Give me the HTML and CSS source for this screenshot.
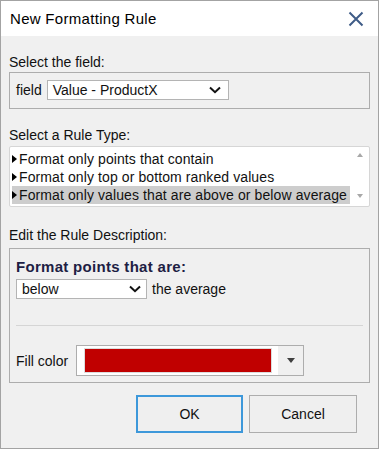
FILE: index.html
```html
<!DOCTYPE html>
<html>
<head>
<meta charset="utf-8">
<title>New Formatting Rule</title>
<link rel="stylesheet" href="styles.css">
</head>
<body>
<div class="window">
  <div class="titlebar">
    <span class="title">New Formatting Rule</span>
    <svg class="close" width="16" height="16" viewBox="0 0 16 16"><path d="M1.5 1.5L14.5 14.5M14.5 1.5L1.5 14.5" stroke="#3f5c87" stroke-width="2" fill="none"/></svg>
  </div>
  <div class="content">
    <div class="label">Select the field:</div>
    <div class="group field-group">
      <span>field</span>
      <div class="select select-field">
        <span>Value - ProductX</span>
        <svg class="chev" width="12" height="8" viewBox="0 0 12 8"><path d="M1 1.5L6 6.2L11 1.5" stroke="#111" stroke-width="2" fill="none"/></svg>
      </div>
    </div>

    <div class="label label-rule">Select a Rule Type:</div>
    <div class="listbox">
      <div class="items">
        <div class="item"><span class="bullet"></span>Format only points that contain</div>
        <div class="item"><span class="bullet"></span>Format only top or bottom ranked values</div>
        <div class="item selected"><span class="bullet"></span>Format only values that are above or below average</div>
      </div>
      <div class="scroll">
        <span class="arrow up"></span>
        <span class="arrow down"></span>
      </div>
    </div>

    <div class="label label-desc">Edit the Rule Description:</div>
    <div class="group desc-group">
      <div class="bold-label">Format points that are:</div>
      <div class="below-row">
        <div class="select select-below">
          <span>below</span>
          <svg class="chev" width="12" height="8" viewBox="0 0 12 8"><path d="M1 1.5L6 6.2L11 1.5" stroke="#111" stroke-width="2" fill="none"/></svg>
        </div>
        <span>the average</span>
      </div>
      <div class="separator"></div>
      <div class="fill-row">
        <span>Fill color</span>
        <div class="picker">
          <span class="swatch"></span>
          <span class="drop"><span class="tri"></span></span>
        </div>
      </div>
    </div>

    <div class="buttons">
      <div class="btn ok">OK</div>
      <div class="btn cancel">Cancel</div>
    </div>
  </div>
</div>
</body>
</html>
```
FILE: styles.css
```css
html, body {
  margin: 0;
  padding: 0;
}
body {
  font-family: "Liberation Sans", Arial, sans-serif;
  font-size: 14px;
  color: #111;
  background: #f0f0f0;
}
.window {
  width: 379px;
  height: 449px;
  box-sizing: border-box;
  border: 1px solid #a3a3a3;
  background: #f0f0f0;
  display: flex;
  flex-direction: column;
}
.titlebar {
  height: 35px;
  flex-shrink: 0;
  background: #fff;
  display: flex;
  align-items: center;
  justify-content: space-between;
  padding: 0 14px 0 9px;
}
.title {
  font-size: 15px;
  letter-spacing: 0.3px;
  line-height: 17px;
  color: #000;
}
.close {
  display: block;
}
.content {
  padding: 17px 8px 0;
  display: flex;
  flex-direction: column;
}
.label {
  height: 18px;
  line-height: 18px;
}
.group {
  border: 1px solid #adadad;
}
.field-group {
  margin-top: 1px;
  display: flex;
  align-items: center;
  gap: 5px;
  padding: 7px 6px 8px;
}
.select {
  height: 20px;
  box-sizing: border-box;
  border: 1px solid #b4b4b4;
  background: #fff;
  display: flex;
  align-items: center;
  justify-content: space-between;
}
.select-field {
  width: 182px;
  padding: 0 7px 0 5px;
}
.select-below {
  width: 131px;
  padding: 0 5px 0 5px;
}
.chev {
  display: block;
}
.label-rule {
  margin-top: 17px;
}
.listbox {
  margin-top: 2px;
  height: 61px;
  box-sizing: border-box;
  border: 1px solid #d6d6d6;
  border-radius: 2px;
  background: #fff;
  display: flex;
  padding: 3px 0 2px 2px;
}
.items {
  width: 338px;
  display: flex;
  flex-direction: column;
}
.item {
  height: 18px;
  line-height: 18px;
  display: flex;
  align-items: center;
  white-space: nowrap;
  letter-spacing: 0.1px;
}
.item.selected {
  background: #cdcdcd;
}
.bullet {
  width: 0;
  height: 0;
  border-left: 5px solid #000;
  border-top: 4px solid transparent;
  border-bottom: 4px solid transparent;
  margin-right: 2px;
}
.scroll {
  flex: 1;
  display: flex;
  flex-direction: column;
  align-items: center;
  justify-content: space-between;
  padding: 3px 0 6px;
}
.arrow {
  width: 0;
  height: 0;
  border-left: 3.5px solid transparent;
  border-right: 3.5px solid transparent;
}
.arrow.up {
  border-bottom: 4px solid #a8a8a8;
}
.arrow.down {
  border-top: 4px solid #a8a8a8;
}
.label-desc {
  margin-top: 19px;
}
.desc-group {
  margin-top: 4px;
  padding: 9px 6px 6px;
  display: flex;
  flex-direction: column;
}
.bold-label {
  font-weight: bold;
  font-size: 15px;
  letter-spacing: 0.3px;
  height: 18px;
  line-height: 18px;
  color: #1e1e44;
}
.below-row {
  margin-top: 3px;
  display: flex;
  align-items: center;
  gap: 5px;
}
.separator {
  margin-top: 26px;
  height: 1px;
  background: #d5d5d5;
}
.fill-row {
  margin-top: 19px;
  display: flex;
  align-items: center;
  gap: 8px;
}
.picker {
  width: 228px;
  height: 31px;
  box-sizing: border-box;
  border: 1px solid #adadad;
  background: #fff;
  display: flex;
  align-items: stretch;
  padding-left: 8px;
}
.swatch {
  width: 186px;
  height: 23px;
  align-self: center;
  background: #c00000;
  box-shadow: 0 0 0 1px #dcdcdc;
}
.drop {
  margin-left: auto;
  width: 25px;
  background: #f0f0f0;
  display: flex;
  align-items: center;
  justify-content: center;
}
.tri {
  width: 0;
  height: 0;
  border-top: 5px solid #404040;
  border-left: 4px solid transparent;
  border-right: 4px solid transparent;
}
.buttons {
  margin-top: 12px;
  display: flex;
  justify-content: flex-end;
  gap: 6px;
  padding-right: 13px;
}
.btn {
  height: 38px;
  box-sizing: border-box;
  background: #efefef;
  border: 1px solid #adadad;
  display: flex;
  align-items: center;
  justify-content: center;
  color: #111;
}
.ok {
  width: 107px;
  border: 2px solid #3d98da;
}
.cancel {
  width: 108px;
}
```
